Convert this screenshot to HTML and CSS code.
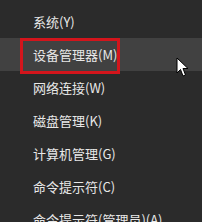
FILE: index.html
```html
<!DOCTYPE html>
<html lang="zh-CN">
  <head>
    <meta charset="UTF-8" />
    <title>Win+X 菜单</title>
    <link rel="stylesheet" href="styles.css">
  </head>
  <body>
    <ul class="menu">
      <li class="item">系统(Y)</li>
      <li class="item active">
        <span class="mark"></span>
        设备管理器(M)
      </li>
      <li class="item">网络连接(W)</li>
      <li class="item">磁盘管理(K)</li>
      <li class="item">计算机管理(G)</li>
      <li class="item">命令提示符(C)</li>
      <li class="item">命令提示符(管理员)(A)</li>
    </ul>

    <!-- 鼠标指针 -->
    <svg class="cursor" width="14" height="21" viewBox="0 0 14 21">
      <path d="M1 1 L1 16 L4.5 12.5 L7 19 L9.5 18 L7 11.5 L12 11.5 Z"
            fill="#fff" stroke="#000" stroke-width="1" stroke-linejoin="round" />
    </svg>
  </body>
</html>
```

FILE: styles.css
```css
* {
  margin: 0;
  padding: 0;
  box-sizing: border-box;
}

body {
  font-family: "Noto Sans CJK SC", "Microsoft YaHei", sans-serif;
  background-color: #2b2b2b;
  color: #e8e8e8;
  overflow: hidden;
  position: relative;
  height: 222px;
}

.menu {
  list-style: none;
  padding-top: 5px;
}

.item {
  height: 33px;
  display: flex;
  align-items: center;
  padding-left: 33px;
  font-size: 13px;
  line-height: 1;
  white-space: nowrap;
  position: relative;
}

.item.active {
  background-color: #414141;
}

.mark {
  position: absolute;
  left: 20px;
  top: 0;
  width: 100px;
  height: 36px;
  border: 3px solid #d3151c;
}

.cursor {
  position: absolute;
  left: 176px;
  top: 57px;
}
```
